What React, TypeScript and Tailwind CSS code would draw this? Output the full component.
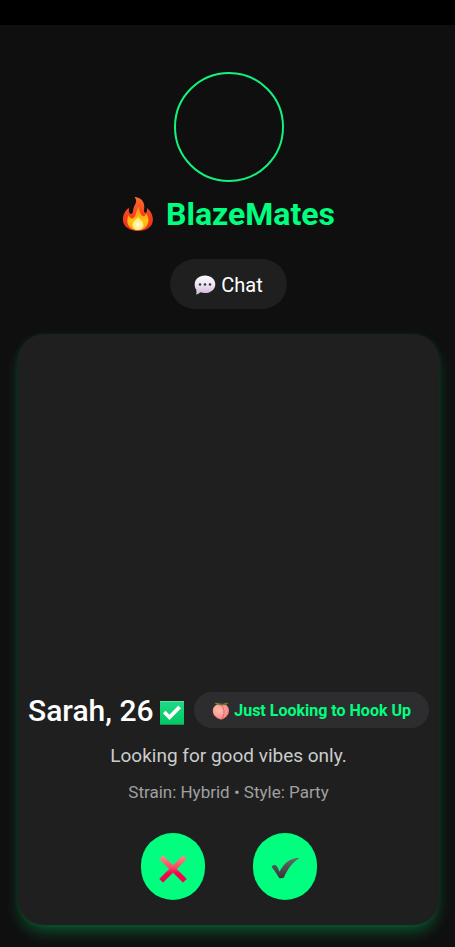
import React from "react";

function FlameIcon() {
  return (
    <svg viewBox="0 0 32 36" className="h-9 w-8 shrink-0" aria-hidden="true">
      <defs>
        <linearGradient id="flame-outer" x1="0" y1="0" x2="0" y2="1">
          <stop offset="0" stopColor="#ff6d2e" />
          <stop offset="0.55" stopColor="#f4401c" />
          <stop offset="1" stopColor="#e8301c" />
        </linearGradient>
        <linearGradient id="flame-mid" x1="0" y1="0" x2="0" y2="1">
          <stop offset="0" stopColor="#ff8a1e" />
          <stop offset="0.6" stopColor="#ffc20e" />
          <stop offset="1" stopColor="#ff9a1a" />
        </linearGradient>
        <radialGradient id="flame-core" cx="0.5" cy="0.6" r="0.6">
          <stop offset="0" stopColor="#fffde0" />
          <stop offset="1" stopColor="#ffe14a" />
        </radialGradient>
      </defs>
      <path
        d="M12.4 1c6 .2 10.300 4.600 9.900 10.300-.1 2.300-.8 4.200.300 5.300 1.500 1.200 3-.8 2.300-4.600 3.900 2.800 6 7.300 6 11.800C30.900 30.800 24.600 35 16 35S.9 30.600.9 23.600c0-4.900 2.500-9.300 6.100-11.800-.6 3.600.4 6.300 2.200 6.100 2.300-.3 1.300-3.300 2.600-6.600 1.500-3.700 4.200-6 .6-10.300Z"
        fill="url(#flame-outer)"
      />
      <path
        d="M17 11c.2 4.200 1 6.600 2.900 8.500 1.400 1.400 3.200.6 4.300-1.900 2.200 3 2.800 6 2 9-1.200 4.800-5.200 7.700-10.200 7.700-5.800 0-10.300-3.300-10.600-8.600-.1-2.500.4-4.600 1.300-6.600.8 2.600 2.300 4.100 4.200 3.200C14.600 20.600 13.300 15 17 11Z"
        fill="url(#flame-mid)"
      />
      <path
        d="M16.300 20.600c.4 2.500 5.300 4.300 5.300 8.500 0 3-2.500 5-5.600 5s-5.700-2-5.700-5c0-4 4.600-5.200 6-8.500Z"
        fill="url(#flame-core)"
      />
    </svg>
  );
}

function SpeechIcon() {
  return (
    <svg viewBox="0 0 22 20" className="h-5 w-[22px] shrink-0" aria-hidden="true">
      <defs>
        <linearGradient id="speech" x1="0" y1="0" x2="0" y2="1">
          <stop offset="0" stopColor="#fbf9fc" />
          <stop offset="0.5" stopColor="#eee5f1" />
          <stop offset="1" stopColor="#cdb6d8" />
        </linearGradient>
      </defs>
      <path
        d="M11 .5c5.900 0 10.300 3.700 10.300 8.700S17 18 11 18c-1.700 0-3.200-.2-4.600-.8-1.200 1.100-2.500 1.900-4.300 2.200.4-1.500.5-2.900.3-4.500C1.200 13.400.7 11.500.7 9.200.7 4.200 5.100.5 11 .5Z"
        fill="url(#speech)"
      />
      <circle cx="6" cy="9.500" r="1.300" fill="#3b3440" />
      <circle cx="11" cy="9.500" r="1.300" fill="#3b3440" />
      <circle cx="16" cy="9.500" r="1.300" fill="#3b3440" />
    </svg>
  );
}

function VerifiedIcon() {
  return (
    <svg viewBox="0 0 24 24" className="mt-1 h-6 w-6 shrink-0" role="img" aria-label="Verified">
      <defs>
        <linearGradient id="verified" x1="0" y1="0" x2="0" y2="1">
          <stop offset="0" stopColor="#20d98a" />
          <stop offset="1" stopColor="#00c75f" />
        </linearGradient>
      </defs>
      <rect width="24" height="24" rx="1" fill="url(#verified)" />
      <path d="M0 23h24v1H0Z" fill="#12934f" />
      <path d="M0 0h24v1H0Z" fill="#62dda0" />
      <path
        d="M3.300 12.200 5.500 10l3.900 3.900L18.300 5l2.300 2.200L9.500 18.700Z"
        fill="#fff"
        stroke="#fff"
        strokeWidth="0.6"
        strokeLinejoin="round"
      />
    </svg>
  );
}

function PeachIcon() {
  return (
    <svg viewBox="0 0 18 18" className="h-[18px] w-[18px] shrink-0" aria-hidden="true">
      <defs>
        <radialGradient id="peach" cx="0.4" cy="0.4" r="0.65">
          <stop offset="0" stopColor="#ffc0ae" />
          <stop offset="0.55" stopColor="#ff9f98" />
          <stop offset="1" stopColor="#f47880" />
        </radialGradient>
      </defs>
      <path
        d="M8.800 2.400C12.700.8 17 4 17 8.400c0 4.200-3.200 7.300-7 9-.6.3-1.300.2-1.900-.1C4 15.700.8 13 .8 8.700.8 4.400 4.900 1.200 8.800 2.400Z"
        fill="url(#peach)"
      />
      <path
        d="M9.400 3c2.200 2.500 3 5.200 2.600 8.300-.3 2.300-1.200 4.200-2.500 5.700"
        fill="none"
        stroke="#d94e60"
        strokeWidth="0.8"
      />
      <path d="M9 3.100C6.500 3.600 4 2.900 2.600 1.100 5 .5 7.800.9 9 3.100Z" fill="#77852f" />
      <path d="M9 3.100C10.600 1 13.600.1 16.400 1c-1.800 2-4.600 2.700-7.400 2.100Z" fill="#637828" />
      <path d="M8.400.4h1.300v3H8.400Z" fill="#76512f" />
    </svg>
  );
}

function CrossIcon() {
  return (
    <svg viewBox="0 0 28 28" className="mt-1 h-7 w-7" aria-hidden="true">
      <defs>
        <linearGradient id="cross" x1="0" y1="0" x2="0" y2="1">
          <stop offset="0" stopColor="#ff8b87" />
          <stop offset="0.45" stopColor="#f84665" />
          <stop offset="0.65" stopColor="#f5054f" />
          <stop offset="1" stopColor="#f00050" />
        </linearGradient>
      </defs>
      <path
        d="M4 .8 14 10.600 24 .8 27.300 4 17.400 14l9.900 9.900-3.300 3.300-10-9.900-10 9.900-3.300-3.300 9.900-9.900L.7 4Z"
        fill="url(#cross)"
        stroke="url(#cross)"
        strokeWidth="0.9"
        strokeLinejoin="round"
      />
    </svg>
  );
}

function CheckIcon() {
  return (
    <svg viewBox="0 0 28 22" className="mt-0.5 h-[22px] w-7" aria-hidden="true">
      <defs>
        <linearGradient id="check" x1="0" y1="0" x2="0" y2="1">
          <stop offset="0" stopColor="#666a69" />
          <stop offset="1" stopColor="#343638" />
        </linearGradient>
      </defs>
      <path
        d="M.8 9.200c1.200-1 3.200-1.400 4.200-.8 1.500.9 2.300 3.700 3.600 6.300C12.500 6.700 19 1.200 27.500.8c.4.3.4.900 0 1.200C21.500 5.300 17 11.500 13 20.300c-.5 1-4.200 1.300-5 .4C6.200 17.500 3.400 13.500.8 10.300Z"
        fill="url(#check)"
      />
    </svg>
  );
}

const actionClass =
  "flex h-[67px] w-16 items-center justify-center rounded-full bg-[#00ff7f]";

export default function App() {
  return (
    <div className="min-h-screen bg-[#0f0f0f] font-[Roboto,sans-serif] text-white">
      <div className="h-[25px] bg-black" />
      <main className="flex flex-col items-center pt-[47px] pr-4 pb-[22px] pl-[18px]">
        <div className="size-[110px] rounded-full border-2 border-[#12f37e]" />
        <h1 className="mt-3 flex items-center gap-3 text-[32px] leading-10 font-bold text-[#00ff7f]">
          <FlameIcon />
          BlazeMates
        </h1>
        <button
          type="button"
          className="mt-[25px] flex h-[50px] items-center gap-[5px] rounded-full bg-[#1f1f1f] px-6 pt-0.5 text-xl"
        >
          <SpeechIcon />
          Chat
        </button>
        <article className="mt-[25px] flex w-full flex-col items-center rounded-[26px] bg-[#1f1f1f] px-2.5 pb-[25px] shadow-[0_9px_16px_-3px_rgba(0,255,127,0.3),0_0_6px_rgba(0,255,127,0.08)]">
          <div className="h-[358px] w-full" />
          <div className="flex h-9 w-full items-center justify-between whitespace-nowrap">
            <h2 className="flex items-center gap-1.5 pt-0.5 text-[30px] leading-9 font-medium">
              Sarah, 26
              <VerifiedIcon />
            </h2>
            <span className="flex h-9 items-center gap-1 rounded-full bg-[#2d2d2f] px-[18px] pt-0.5 text-base font-bold text-[#00ff7f]">
              <PeachIcon />
              Just Looking to Hook Up
            </span>
          </div>
          <p className="mt-3.5 text-[19px] leading-7 text-[#cccccc]">
            Looking for good vibes only.
          </p>
          <p className="mt-2.5 text-[17px] leading-6 text-[#a0a0a0]">
            Strain: Hybrid • Style: Party
          </p>
          <div className="mt-[29px] flex gap-12">
            <button type="button" aria-label="Pass" className={actionClass}>
              <CrossIcon />
            </button>
            <button type="button" aria-label="Like" className={actionClass}>
              <CheckIcon />
            </button>
          </div>
        </article>
      </main>
    </div>
  );
}
